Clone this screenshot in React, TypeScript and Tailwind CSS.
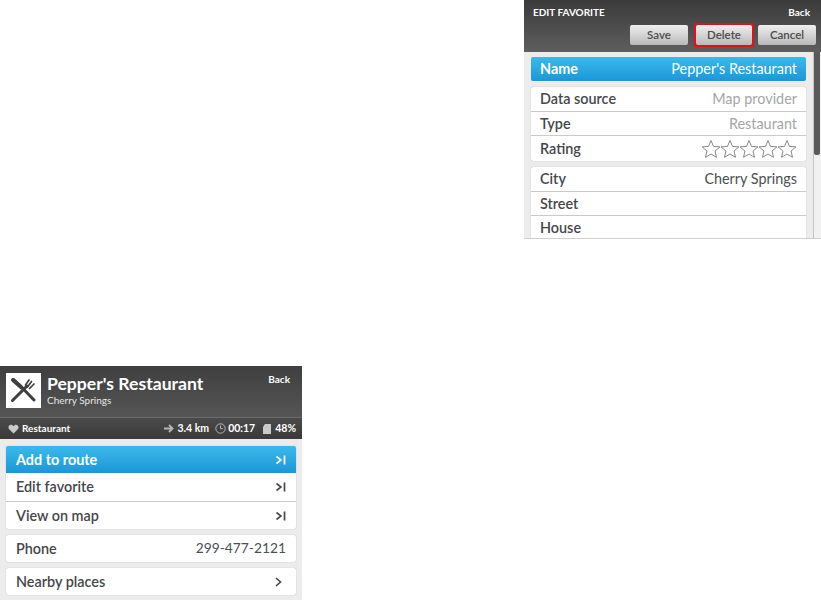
const font = "font-['Lato','Liberation_Sans',sans-serif]";

function Star() {
  return (
    <svg width="20" height="20" viewBox="0 0 20 20" className="-ml-[1px]">
      <path
        d="M10 1.5l2.5 5.9 6.4.5-4.9 4.2 1.5 6.2L10 15l-5.5 3.3L6 12.1 1.1 7.9l6.4-.5z"
        fill="#fff"
        stroke="#77797b"
        strokeWidth="0.9"
      />
    </svg>
  );
}

function EndArrow() {
  return (
    <svg width="11" height="10" viewBox="0 0 11 10" fill="none" stroke="currentColor">
      <path d="M1.5 1.5L6 5L1.5 8.5" strokeWidth="1.6" />
      <path d="M9.5 0.5V9.5" strokeWidth="1.7" />
    </svg>
  );
}

function Row({ label, value, muted, last, h }: { label: string; value?: string; muted?: boolean; last?: boolean; h: string }) {
  return (
    <div className={`${h} flex items-center justify-between pl-[9px] pr-[9px] ${last ? "" : "border-b border-[#c9cacb]"}`}>
      <span className="text-[14.4px] font-semibold text-[#45474a]">{label}</span>
      {value && <span className={`text-[14.4px] ${muted ? "text-[#a4a6a8]" : "text-[#4d4f52]"}`}>{value}</span>}
    </div>
  );
}

function HeadButton({ children, w }: { children: string; w: string }) {
  return (
    <div className={`${w} h-[20px] flex items-center justify-center rounded-[2px] bg-gradient-to-b from-[#f0f0f0] to-[#b9b9b9] text-[11.5px] font-semibold text-[#4a4c4e]`}>
      {children}
    </div>
  );
}

function EditFavorite() {
  return (
    <div className="self-end w-[297px] h-[239px] flex flex-col overflow-hidden bg-[#ececec] border-b border-[#d0d0d0]">
      <div className="h-[52px] shrink-0 bg-gradient-to-b from-[#3b3b3b] to-[#5e5e5e] pl-[9px] pr-[5px] pt-[6px]">
        <div className="flex justify-between pr-[6px] text-[10px] font-bold text-white leading-[12px]">
          <span>EDIT FAVORITE</span>
          <span>Back</span>
        </div>
        <div className="flex justify-end items-center mt-[5px]">
          <HeadButton w="w-[58px]">Save</HeadButton>
          <div className="border-[2px] border-[#e0101c] ml-[6px] mr-[4px]">
            <HeadButton w="w-[56px]">Delete</HeadButton>
          </div>
          <HeadButton w="w-[58px]">Cancel</HeadButton>
        </div>
      </div>
      <div className="flex-1 flex pt-[5px] pl-[7px] min-h-0">
        <div className="w-[275px] flex flex-col gap-[6px]">
          <div className="h-[24px] shrink-0 rounded-[2px] bg-gradient-to-b from-[#3bb9ea] to-[#1a97d8] flex items-center justify-between pl-[9px] pr-[9px] text-white">
            <span className="text-[14.4px] font-bold">Name</span>
            <span className="text-[14.4px]">Pepper's Restaurant</span>
          </div>
          <div className="shrink-0 rounded-[2px] bg-white shadow-[0_0_1px_#9a9a9a]">
            <Row h="h-[25px]" label="Data source" value="Map provider" muted />
            <Row h="h-[24px]" label="Type" value="Restaurant" muted />
            <div className="h-[25px] flex items-center justify-between pl-[9px] pr-[9px]">
              <span className="text-[14.4px] font-semibold text-[#45474a]">Rating</span>
              <div className="flex">
                <Star />
                <Star />
                <Star />
                <Star />
                <Star />
              </div>
            </div>
          </div>
          <div className="shrink-0 rounded-t-[2px] bg-white shadow-[0_0_1px_#9a9a9a]">
            <Row h="h-[25px]" label="City" value="Cherry Springs" />
            <Row h="h-[24px]" label="Street" />
            <Row h="h-[24px]" label="House" last />
          </div>
        </div>
        <div className="ml-[7px] flex-1 -mt-[5px] border-l border-[#c4c4c4] bg-[#f1f1f1] flex justify-end pr-[1px]">
          <div className="w-[6px] h-[103px] bg-[#5a5a5a] rounded-b-[2px]" />
        </div>
      </div>
    </div>
  );
}

function PlaceDetails() {
  return (
    <div className="w-[302px] h-[234px] flex flex-col overflow-hidden bg-[#ececec]">
      <div className="h-[73px] shrink-0 bg-gradient-to-b from-[#3f3f3f] to-[#5f5f5f] flex flex-col">
        <div className="h-[52px] flex pl-[6px] pr-[12px] pt-[7px] border-b border-[#6a6a6a]">
          <div className="w-[35px] h-[35px] bg-white shrink-0">
            <svg width="35" height="35" viewBox="0 0 35 35" fill="none" stroke="#3f3f3f">
              <path d="M7.500 6.500L14 12.500L28 27" strokeWidth="3" strokeLinecap="round" />
              <path d="M7 7L15.500 14.500" strokeWidth="4" strokeLinecap="round" />
              <path d="M6.500 27.500L21 13" strokeWidth="3" strokeLinecap="round" />
              <path d="M19.500 12L23 7M21.500 14L25.500 8.500M23.500 15.500L28 11" strokeWidth="1.7" strokeLinecap="round" />
            </svg>
          </div>
          <div className="ml-[6px] flex-1">
            <div className="text-[17.6px] leading-[22px] font-bold text-white">Pepper's Restaurant</div>
            <div className="text-[10px] leading-[11px] text-[#e6e6e6]">Cherry Springs</div>
          </div>
          <span className="text-[10px] font-bold text-white leading-[12px]">Back</span>
        </div>
        <div className="flex-1 bg-gradient-to-b from-[#4a4a4a] to-[#3a3a3a] flex items-center justify-between pl-[8px] pr-[6px] text-[10px] font-bold text-white">
          <span className="flex items-center gap-[3px]">
            <svg width="11" height="10" viewBox="0 0 11 10" fill="#c9c9c9">
              <path d="M5.5 9.5L1 5C-.4 3.2 1 .8 3 .8c1.1 0 2 .6 2.5 1.5C6 1.4 6.900.8 8 .8c2 0 3.400 2.400 2 4.200z" />
            </svg>
            Restaurant
          </span>
          <span className="flex items-center">
            <svg width="10" height="9" viewBox="0 0 10 9" fill="none" stroke="#b5b5b5" strokeWidth="1.900">
              <path d="M0 4.500H8.500M5 1l3.500 3.500L5 8" />
            </svg>
            <span className="ml-[3px] text-[10.5px]">3.4 km</span>
            <svg width="11" height="11" viewBox="0 0 11 11" fill="none" stroke="#b5b5b5" className="ml-[6px]">
              <circle cx="5.500" cy="5.500" r="4.700" />
              <path d="M5.500 2.500V5.700H8" />
            </svg>
            <span className="ml-[2px] text-[10.5px]">00:17</span>
            <svg width="8" height="10" viewBox="0 0 8 10" fill="#c9c9c9" className="ml-[8px]">
              <path d="M0 3L2 0H8V10H0z" />
            </svg>
            <span className="ml-[4px] text-[10.5px]">48%</span>
          </span>
        </div>
      </div>
      <div className="px-[6px] pt-[7px] flex flex-col gap-[6px]">
        <div className="rounded-[2px] bg-white shadow-[0_0_1px_#9a9a9a]">
          <div className="h-[27px] rounded-t-[2px] bg-gradient-to-b from-[#3bb9ea] to-[#1a97d8] flex items-center justify-between pl-[10px] pr-[10px] text-white">
            <span className="text-[14.4px] font-bold">Add to route</span>
            <EndArrow />
          </div>
          <div className="h-[29px] flex items-center justify-between px-[10px] border-b border-[#c9cacb] text-[#45474a]">
            <span className="text-[14.4px] font-semibold">Edit favorite</span>
            <EndArrow />
          </div>
          <div className="h-[27px] flex items-center justify-between px-[10px] text-[#45474a]">
            <span className="text-[14.4px] font-semibold">View on map</span>
            <EndArrow />
          </div>
        </div>
        <div className="h-[27px] rounded-[2px] bg-white shadow-[0_0_1px_#9a9a9a] flex items-center justify-between px-[10px]">
          <span className="text-[14.4px] font-semibold text-[#45474a]">Phone</span>
          <span className="text-[13.8px] text-[#4d4f52]">299-477-2121</span>
        </div>
        <div className="h-[27px] rounded-[2px] bg-white shadow-[0_0_1px_#9a9a9a] flex items-center justify-between pl-[10px] pr-[14px] text-[#45474a]">
          <span className="text-[14.4px] font-semibold">Nearby places</span>
          <svg width="7" height="10" viewBox="0 0 7 10" fill="none" stroke="currentColor" strokeWidth="1.6">
            <path d="M1 1l4.500 4L1 9" />
          </svg>
        </div>
      </div>
    </div>
  );
}

export default function App() {
  return (
    <div className={`w-[821px] h-[600px] bg-white flex flex-col justify-between overflow-hidden ${font}`}>
      <EditFavorite />
      <PlaceDetails />
    </div>
  );
}
